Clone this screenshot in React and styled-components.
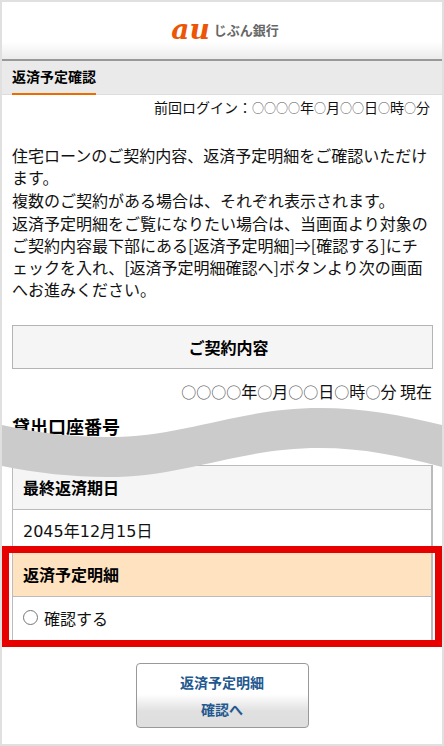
import React, { useState } from 'react'
import styled, { createGlobalStyle } from 'styled-components'

const GlobalStyle = createGlobalStyle`
    * {
        box-sizing: border-box;
    }

    body {
        margin: 0;
        background: #fff;
        color: #111;
        font-family: 'Noto Sans CJK JP', sans-serif;
        font-size: 16px;
        line-height: 22px;
    }
`

const Page = styled.div`
    border: 2px solid #e0e0e0;
`

const Header = styled.header`
    display: flex;
    align-items: center;
    justify-content: center;
    gap: 4px;
    height: 59px;
    padding-left: 6px;
    border-bottom: 2px solid #999;
    background: linear-gradient(#fff 70%, #ececec);
`

const Brand = styled.span`
    color: #eb5505;
    font-family: 'DejaVu Serif', serif;
    font-size: 28px;
    font-style: italic;
    font-weight: bold;
    line-height: 40px;
    padding-bottom: 2px;
`

const BankName = styled.span`
    color: #666;
    font-size: 13px;
    font-weight: bold;
    padding-bottom: 2px;
`

const TitleBar = styled.div`
    display: flex;
    height: 34px;
    padding: 0 10px;
    border-bottom: 1px solid #ddd;
    background: #eaeaea;
`

const Title = styled.h1`
    height: 34px;
    margin: 0;
    border-bottom: 2px solid #eb6d00;
    color: #000;
    font-size: 14px;
    line-height: 30px;
`

const Main = styled.main`
    padding-bottom: 16px;
`

const LastLogin = styled.p`
    margin: 2px 12px 27px;
    font-size: 14px;
    line-height: 20px;
    text-align: right;
`

const Circles = styled.span`
    color: #555;
    font-size: ${props => props.$size}px;
    line-height: 1;
`

const Intro = styled.div`
    display: grid;
    gap: 1px;
    margin: 0 10px 25px;

    p {
        margin: 0;
    }
`

const ContractTitle = styled.h2`
    margin: 0 9px 11px 10px;
    padding: 10px 0 10px 12px;
    border: 1px solid #b4b4b4;
    background: #f5f5f5;
    color: #000;
    font-size: 16px;
    text-align: center;
`

const AsOf = styled.p`
    margin: 0 10px;
    text-align: right;
`

const Omitted = styled.section`
    position: relative;
    padding: 12px 10px 27px;
`

const AccountTitle = styled.h3`
    margin: 0;
    color: #000;
    font-size: 18px;
    line-height: 24px;
`

const Wave = styled.svg`
    position: absolute;
    z-index: 1;
    top: 4px;
    left: 0;
    width: 100%;
    height: 72px;
    fill: #cbcbcb;
`

const TableArea = styled.div`
    padding: 0 9px 0 10px;
`

const Highlight = styled.div`
    padding: 0 2px 0 3px;
    border: 7px solid #e60000;
`

const Table = styled.table`
    width: 100%;
    border: solid #bbb;
    border-width: ${props => (props.$topLine ? '1px 2px 0 1px' : '0 2px 0 1px')};
    border-spacing: 0;
`

const HeadCell = styled.th`
    height: 44px;
    padding: 0 10px 2px;
    border-bottom: 1px solid #bbb;
    background: ${props => (props.$accent ? '#ffe3c1' : '#f5f5f5')};
    color: #000;
    text-align: left;
`

const Cell = styled.td`
    height: ${props => (props.$cut ? 36 : 43)}px;
    padding: ${props => (props.$cut ? '8px 10px 0' : '0 10px 2px')};
    line-height: 22px;
`

const DateText = styled.span`
    display: block;
    font-family: 'DejaVu Sans', 'Noto Sans CJK JP', sans-serif;
`

const RadioLabel = styled.label`
    display: flex;
    align-items: center;
    gap: 6px;
`

const Radio = styled.input`
    appearance: none;
    width: 15px;
    height: 15px;
    margin: 0;
    border: 1px solid #767676;
    border-radius: 50%;
    background: #fff;

    &:checked {
        background: radial-gradient(#0075ff 50%, #fff 55%);
    }
`

const SubmitButton = styled.button`
    display: block;
    width: 173px;
    margin: 16px auto 0;
    padding: 5px 0 4px;
    border: 1px solid #999;
    border-radius: 4px;
    background: linear-gradient(#fff 48%, #e0e0e0 75%, #dedede);
    color: #23588f;
    font-family: inherit;
    font-size: 14px;
    font-weight: bold;
    line-height: 27px;
`

function Timestamp({ size }) {

    return (
        <React.Fragment>
            <Circles $size={size}>○○○○</Circles>年
            <Circles $size={size}>○</Circles>月
            <Circles $size={size}>○○</Circles>日
            <Circles $size={size}>○</Circles>時
            <Circles $size={size}>○</Circles>分
        </React.Fragment>
    )
}

function App() {
    const [confirmed, setConfirmed] = useState(false)

    return (
        <Page>
            <GlobalStyle />
            <Header>
                <Brand>au</Brand>
                <BankName>じぶん銀行</BankName>
            </Header>
            <TitleBar>
                <Title>返済予定確認</Title>
            </TitleBar>
            <Main>
                <LastLogin>
                    前回ログイン：<Timestamp size={12} />
                </LastLogin>
                <Intro>
                    <p>住宅ローンのご契約内容、返済予定明細をご確認いただけます。</p>
                    <p>複数のご契約がある場合は、それぞれ表示されます。</p>
                    <p>
                        返済予定明細をご覧になりたい場合は、当画面より対象のご契約内容最下部にある[返済予定明細]⇒[確認する]にチェックを入れ、[返済予定明細確認へ]ボタンより次の画面へお進みください。
                    </p>
                </Intro>
                <ContractTitle>ご契約内容</ContractTitle>
                <AsOf>
                    <Timestamp size={15} /> 現在
                </AsOf>
                <Omitted>
                    <AccountTitle>貸出口座番号</AccountTitle>
                    <Wave viewBox="0 0 440 72" preserveAspectRatio="none" aria-hidden="true">
                        <path d="M0 19C35 27 70 31 105 31C185 31 235 2 318 2C360 2 400 9 440 19V61C400 50 360 42 318 42C235 42 185 71 105 71C70 71 35 67 0 60Z" />
                    </Wave>
                </Omitted>
                <TableArea>
                    <Table $topLine>
                        <tbody>
                            <tr>
                                <HeadCell>最終返済期日</HeadCell>
                            </tr>
                            <tr>
                                <Cell $cut>
                                    <DateText>2045年12月15日</DateText>
                                </Cell>
                            </tr>
                        </tbody>
                    </Table>
                </TableArea>
                <Highlight>
                    <Table>
                        <tbody>
                            <tr>
                                <HeadCell $accent>返済予定明細</HeadCell>
                            </tr>
                            <tr>
                                <Cell>
                                    <RadioLabel>
                                        <Radio
                                            type="radio"
                                            name="schedule"
                                            checked={confirmed}
                                            onChange={() => setConfirmed(true)}
                                        />
                                        確認する
                                    </RadioLabel>
                                </Cell>
                            </tr>
                        </tbody>
                    </Table>
                </Highlight>
                <SubmitButton type="button">
                    返済予定明細<br />確認へ
                </SubmitButton>
            </Main>
        </Page>
    )
}

export default App
